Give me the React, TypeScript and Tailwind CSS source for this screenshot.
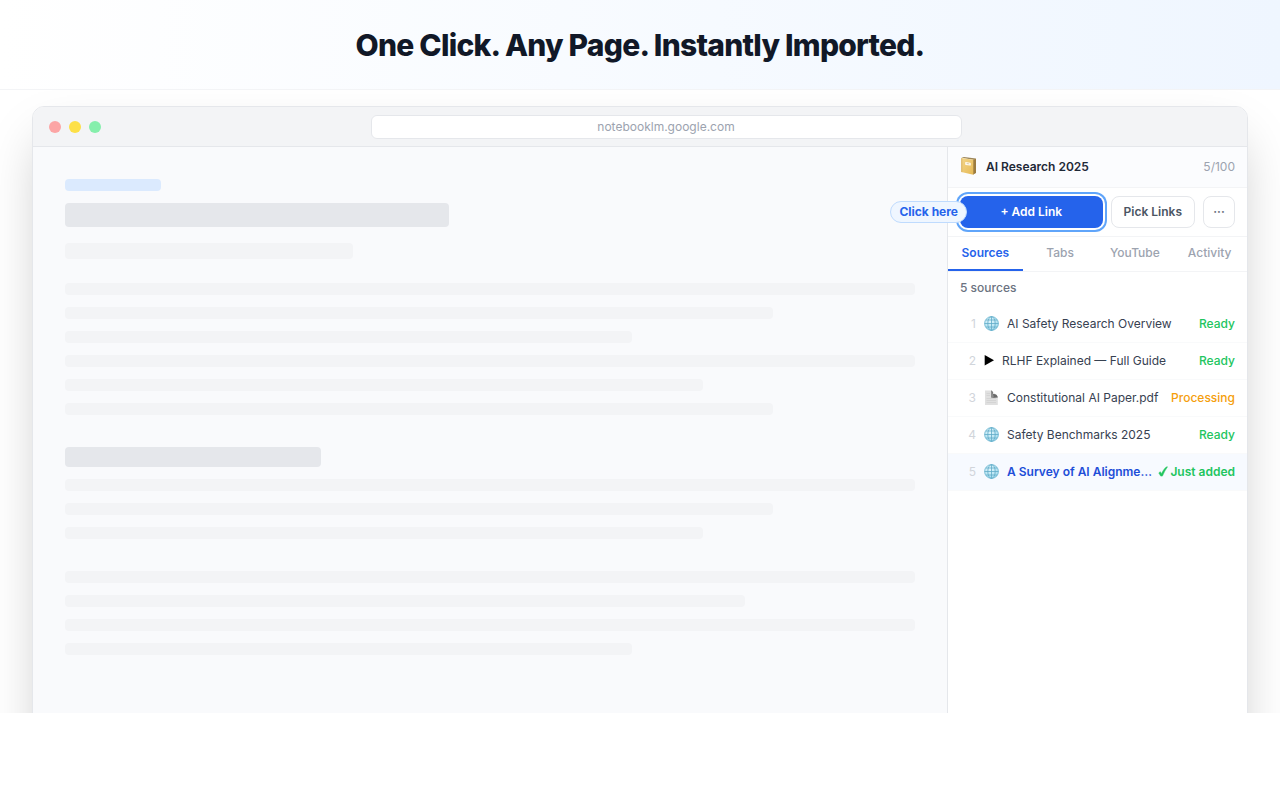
import { useState } from "react";
import clsx from "clsx";

type SourceKind = "web" | "video" | "file";
type SourceStatus = "ready" | "processing" | "added";

interface Source {
  title: string;
  kind: SourceKind;
  status: SourceStatus;
}

const SOURCES: Source[] = [
  { title: "AI Safety Research Overview", kind: "web", status: "ready" },
  { title: "RLHF Explained — Full Guide", kind: "video", status: "ready" },
  { title: "Constitutional AI Paper.pdf", kind: "file", status: "processing" },
  { title: "Safety Benchmarks 2025", kind: "web", status: "ready" },
  { title: "A Survey of AI Alignme…", kind: "web", status: "added" },
];

const TABS = ["Sources", "Tabs", "YouTube", "Activity"];

// Placeholder paragraphs, one width per line
const INTRO = ["w-full", "w-5/6", "w-2/3", "w-full", "w-3/4", "w-5/6"];
const SECTION = ["w-full", "w-5/6", "w-3/4"];
const CLOSING = ["w-full", "w-4/5", "w-full", "w-2/3"];

function NotebookIcon() {
  return (
    <svg width="18" height="20" viewBox="0 0 18 20" aria-hidden="true">
      <defs>
        <linearGradient id="cover" x1="0" y1="0" x2="1" y2="1">
          <stop offset="0" stopColor="#f3d68a" />
          <stop offset="1" stopColor="#e6b955" />
        </linearGradient>
      </defs>
      <path d="M1.400 .8 4 .1l12 1.500L13.500 2.800z" fill="#9c865a" />
      <path d="M13 2.800l3-1.200v14.400L13 17.700z" fill="#9c7c40" />
      <path d="M1.300 1 13.300 2.700v15L1.300 15z" fill="url(#cover)" />
      <path d="M1.300 1 2.300 1.200v14l-1-.2z" fill="#d9b364" />
      <path d="M5.700 5.100 10.200 5.700q.6.100.6.700v1.600q0 .6-.6.500L5.700 7.900q-.5-.1-.5-.6V5.600q0-.5.500-.5z" fill="#fffaf0" />
      <path d="M6.700 6.500l2.600.4" stroke="#c9b892" strokeWidth=".7" />
    </svg>
  );
}

function GlobeIcon() {
  return (
    <svg width="15" height="16" viewBox="0 0 15 16" aria-hidden="true">
      <defs>
        <radialGradient id="globe" cx=".4" cy=".3" r=".7">
          <stop offset="0" stopColor="#e2f6fc" />
          <stop offset="1" stopColor="#a5dcee" />
        </radialGradient>
      </defs>
      <circle cx="7.500" cy="7.500" r="7.200" fill="url(#globe)" />
      <g fill="none" stroke="#5fabc8" strokeWidth=".8">
        <circle cx="7.500" cy="7.500" r="6.900" strokeOpacity=".8" />
        <ellipse cx="7.500" cy="7.500" rx="3.700" ry="6.900" />
        <path d="M7.500 .6v13.800M.6 7.500h13.800M1.800 4h11.400M1.800 11h11.400" />
      </g>
    </svg>
  );
}

function PlayIcon() {
  return (
    <svg width="10" height="16" viewBox="0 0 10 16" aria-hidden="true">
      <path d="M.7 2v10.500l9.300-5.200z" fill="#000" />
    </svg>
  );
}

function FileIcon() {
  return (
    <svg width="15" height="16" viewBox="0 0 15 16" aria-hidden="true">
      <path d="M1 .5h6.500l6.300 6V15H1z" fill="#e0e0e0" />
      <path d="M7 .5c2 .3 2 2.300 2 3.500 2-.5 4.500.5 4.800 3.500L8.500 8z" fill="#6a6a6a" />
      <path d="M7 .5v7.300l3-.3L9 4z" fill="#8e8e8e" />
      <path d="M2.500 3.500h3.500M2.500 5.500h3.500M2.500 8.500h9.500M2.500 10.500h9.500M2.500 12.500h9.500" stroke="#cfcfcf" strokeWidth=".7" />
    </svg>
  );
}

function CheckIcon() {
  return (
    <svg width="10" height="12" viewBox="0 0 10 12" fill="currentColor" aria-hidden="true">
      <path
        d="M.8 6.900 2.300 5.700l1.200 2C4.800 5 6.300 2.500 8.300 1l1.200-.2C7.600 3.500 5.900 6.600 4.400 10.100H2.700z"
        stroke="currentColor"
        strokeWidth=".5"
      />
    </svg>
  );
}

function SourceIcon({ kind }: { kind: SourceKind }) {
  if (kind === "video") return <PlayIcon />;
  if (kind === "file") return <FileIcon />;
  return <GlobeIcon />;
}

function StatusLabel({ status }: { status: SourceStatus }) {
  if (status === "added") {
    return (
      <span className="flex shrink-0 items-center gap-0.5 font-semibold text-[#22c55e]">
        <CheckIcon /> Just added
      </span>
    );
  }
  if (status === "processing") {
    return <span className="shrink-0 font-medium text-[#f59e0b]">Processing</span>;
  }
  return <span className="shrink-0 font-medium text-[#22c55e]">Ready</span>;
}

function Lines({ widths }: { widths: string[] }) {
  return (
    <div className="space-y-3">
      {widths.map((width, i) => (
        <div key={i} className={clsx("h-3 rounded bg-[#f3f4f6]", width)} />
      ))}
    </div>
  );
}

function PagePreview() {
  return (
    <main className="min-w-0 flex-1 bg-[#f9fafc] p-8">
      <div className="h-3 w-24 rounded bg-[#dbeafe]" />
      <div className="mt-3 h-6 w-96 max-w-full rounded bg-[#e5e7eb]" />
      <div className="mt-4 mb-6 h-4 w-72 max-w-full rounded bg-[#f3f4f6]" />
      <Lines widths={INTRO} />
      <div className="mt-8 mb-3 h-5 w-64 max-w-full rounded bg-[#e5e7eb]" />
      <Lines widths={SECTION} />
      <div className="mt-8">
        <Lines widths={CLOSING} />
      </div>
    </main>
  );
}

function SidePanel() {
  const [activeTab, setActiveTab] = useState("Sources");

  return (
    <aside className="w-[300px] shrink-0 border-l border-[#e5e7eb] bg-white text-xs">
      {/* Notebook */}
      <div className="flex h-[41px] items-center gap-2 border-b border-[#f3f4f6] bg-[#fbfcfe] px-3">
        <NotebookIcon />
        <h2 className="flex-1 font-semibold text-[#1f2937]">AI Research 2025</h2>
        <span className="text-[#9ca3af]">5/100</span>
      </div>

      {/* Actions */}
      <div className="flex gap-2 border-b border-[#f3f4f6] px-3 py-2">
        <div className="relative flex-1">
          <button className="h-8 w-full rounded-lg bg-[#2563eb] font-semibold text-white ring-2 ring-[#60a5fa] ring-offset-2">
            + Add Link
          </button>
          <span className="absolute top-1/2 right-full -mr-[7px] -translate-y-1/2 rounded-full border border-[#bfdbfe] bg-[#eff6ff] px-2 py-0.5 font-bold whitespace-nowrap text-[#2563eb]">
            Click here
          </span>
        </div>
        <button className="h-8 rounded-lg border border-[#e5e7eb] px-3 font-semibold text-[#4b5563]">
          Pick Links
        </button>
        <button aria-label="More actions" className="h-8 w-8 rounded-lg border border-[#e5e7eb] font-semibold text-[#6b7280]">
          ···
        </button>
      </div>

      {/* Tabs */}
      <div className="flex border-b border-[#f3f4f6]">
        {TABS.map((tab) => (
          <button
            key={tab}
            onClick={() => setActiveTab(tab)}
            className={clsx(
              "flex-1 basis-0 border-b-2 py-2 leading-4",
              tab === activeTab
                ? "border-[#2563eb] font-semibold text-[#2563eb]"
                : "border-transparent font-medium text-[#9ca3af]"
            )}
          >
            {tab}
          </button>
        ))}
      </div>

      {/* Source list */}
      <p className="px-3 pt-2 pb-2.5 font-medium text-[#6b7280]">5 sources</p>
      <ul>
        {SOURCES.map((source, i) => (
          <li
            key={source.title}
            className={clsx(
              "flex h-[37px] items-center gap-2 border-b border-[#f9fafb] px-3",
              source.status === "added" && "bg-[#f7faff]"
            )}
          >
            <span className="w-4 shrink-0 text-right text-[#d1d5db]">{i + 1}</span>
            <span className="shrink-0">
              <SourceIcon kind={source.kind} />
            </span>
            <span
              className={clsx(
                "min-w-0 flex-1 whitespace-nowrap",
                source.status === "added" ? "font-semibold text-[#1d4ed8]" : "text-[#374151]"
              )}
            >
              {source.title}
            </span>
            <StatusLabel status={source.status} />
          </li>
        ))}
      </ul>
    </aside>
  );
}

export default function App() {
  return (
    <div className="bg-white font-['Inter',sans-serif]">
      <header className="border-b border-[#f3f4f6] bg-[linear-gradient(90deg,#ffffff,#eff6ff)] pt-[25px] pb-6 text-center">
        <h1 className="text-3xl leading-10 font-extrabold tracking-tight text-[#111827]">
          One Click. Any Page. Instantly Imported.
        </h1>
      </header>

      {/* The window runs past the bottom edge and is cut off there */}
      <section className="overflow-hidden px-8 pt-4">
        <div className="-mb-16 overflow-hidden rounded-xl border border-[#e5e7eb] shadow-2xl">
          <div className="flex h-10 items-center border-b border-[#e5e7eb] bg-[#f3f4f6] px-4">
            <div className="flex gap-2">
              <span className="h-3 w-3 rounded-full bg-[#fca5a5]" />
              <span className="h-3 w-3 rounded-full bg-[#fde047]" />
              <span className="h-3 w-3 rounded-full bg-[#86efac]" />
            </div>
            <div className="mx-auto w-1/2 rounded-md border border-[#e5e7eb] bg-white text-center text-xs leading-[22px] text-[#9ca3af]">
              notebooklm.google.com
            </div>
          </div>
          <div className="flex min-h-[629px]">
            <PagePreview />
            <SidePanel />
          </div>
        </div>
      </section>
    </div>
  );
}
